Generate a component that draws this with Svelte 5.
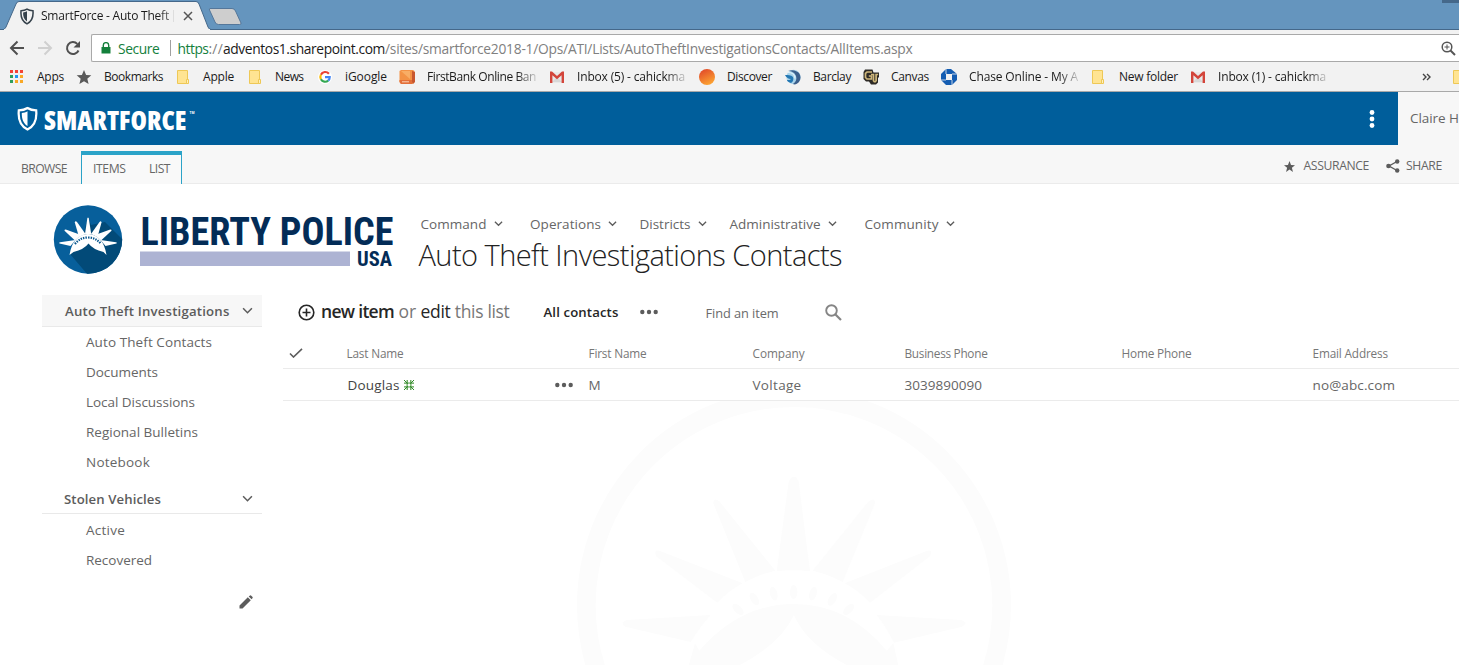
<script>
  const bookmarks = [
    { icon: 'apps', label: 'Apps', cell: 67, gap: 28, w: 27 },
    { icon: 'star', label: 'Bookmarks', cell: 101, gap: 28, w: 59 },
    { icon: 'folder', label: 'Apple', cell: 72, gap: 26, w: 31 },
    { icon: 'folder', label: 'News', cell: 69, gap: 26, w: 28.5 },
    { icon: 'google', label: 'iGoogle', cell: 81, gap: 27, w: 42 },
    { icon: 'bank', label: 'FirstBank Online Ban', cell: 150, gap: 28, w: 109, fade: true },
    { icon: 'gmail', label: 'Inbox (5) - cahickma', cell: 150, gap: 28, w: 108, fade: true },
    { icon: 'discover', label: 'Discover', cell: 86, gap: 28, w: 45 },
    { icon: 'barclay', label: 'Barclay', cell: 78, gap: 28, w: 38 },
    { icon: 'cu', label: 'Canvas', cell: 78, gap: 28, w: 38 },
    { icon: 'chase', label: 'Chase Online - My A', cell: 151, gap: 28, w: 109, fade: true },
    { icon: 'folder', label: 'New folder', cell: 98, gap: 27, w: 59 },
    { icon: 'gmail', label: 'Inbox (1) - cahickma', cell: 150, gap: 28, w: 108, fade: true }
  ];
  const menu = [
    { label: 'Command', w: 66, cell: 109.5 },
    { label: 'Operations', w: 71, cell: 109.5 },
    { label: 'Districts', w: 51, cell: 90 },
    { label: 'Administrative', w: 91, cell: 135 },
    { label: 'Community', w: 74, cell: 100 }
  ];
  const contacts = [
    ['Auto Theft Contacts', 126],
    ['Documents', 72],
    ['Local Discussions', 109],
    ['Regional Bulletins', 112],
    ['Notebook', 64]
  ];
  const vehicles = [
    ['Active', 39],
    ['Recovered', 66]
  ];

  // Spreads the letters so that the text takes up the given width.
  function fit(node, width) {
    const natural = node.getBoundingClientRect().width;
    const n = node.textContent.length;
    node.style.letterSpacing = `${((width - natural) / n).toFixed(3)}px`;
  }
</script>

{#snippet icon(name)}
  {#if name === 'apps'}
    <svg width="16" height="16" viewBox="0 0 16 16">
      {#each ['#f44336', '#f44336', '#f44336', '#2e9e5b', '#2196f3', '#f9a825', '#2e9e5b', '#f9a825', '#f9a825'] as c, i}
        <rect x={1 + (i % 3) * 5} y={1 + Math.floor(i / 3) * 5} width="3" height="3" fill={c} />
      {/each}
    </svg>
  {:else if name === 'star'}
    <svg width="16" height="16" viewBox="0 0 16 16"><path d="M8 1l2.100 4.900 5.200.4-4 3.400 1.300 5.300L8 12.200 3.400 15l1.300-5.300-4-3.400 5.200-.4z" fill="#5a5a5a" /></svg>
  {:else if name === 'folder'}
    <svg width="16" height="16" viewBox="0 0 16 16"><path d="M.5 1.500h10v13h-10z" fill="#ffe492" stroke="#eec856" /><path d="M9.500 10.500h2v4h-2z" fill="#fff0bd" stroke="#eec856" /></svg>
  {:else if name === 'google'}
    <svg width="16" height="16" viewBox="0 0 16 16"><circle cx="7" cy="8" r="7" fill="#fff" /><g fill="none" stroke-width="2.200"><path d="M10.900 4.700A4.800 4.800 0 0 0 2.900 5.700" stroke="#ea4335" /><path d="M2.900 5.700a4.800 4.800 0 0 0 0 4.600" stroke="#fbbc05" /><path d="M2.900 10.300a4.800 4.800 0 0 0 7.300 1.300" stroke="#34a853" /><path d="M10.200 11.600a4.800 4.800 0 0 0 1.500-3.400H7" stroke="#4285f4" /></g></svg>
  {:else if name === 'bank'}
    <svg width="17" height="16" viewBox="0 0 17 16"><path d="M2 1h12l1.500 1v11l-2 2H2L.5 13V2z" fill="#f39245" /><path d="M13 2l3 1v10l-2 2-1-2z" fill="#c8572f" /><path d="M.5 11H13v4H2l-1.500-2z" fill="#e36f39" /><path d="M2 2h9v8z" fill="#f8ad65" /><path d="M3 12.800h7" stroke="#fbd1b4" /></svg>
  {:else if name === 'gmail'}
    <svg width="16" height="16" viewBox="0 0 16 16"><path d="M2 3h12v11H2z" fill="#e9e9e9" /><path d="M3 13l5-5 5 5z" fill="#d8d8d8" /><path d="M1 2.500h2l5 4.600 5-4.600h2V14h-2.400V6.300L8 10.200 3.400 6.300V14H1z" fill="#d3453b" /></svg>
  {:else if name === 'discover'}
    <svg width="16" height="16" viewBox="0 0 16 16"><defs><linearGradient id="orange" x1="0" y1="0" x2=".5" y2="1"><stop offset=".2" stop-color="#e4532a" /><stop offset="1" stop-color="#fba032" /></linearGradient></defs><circle cx="8" cy="8" r="8" fill="url(#orange)" /></svg>
  {:else if name === 'barclay'}
    <svg width="16" height="16" viewBox="0 0 16 16"><circle cx="8.500" cy="8" r="7.200" fill="#a9d3ea" /><path d="M3 2c5-2 9 0 11 2 2 3 2 6 0 9-2 2-4 3-6 2 3-2 4-5 3-8C10 4 7 2 3 2z" fill="#3b5f8c" /><path d="M0 6c3 0 6 0 8 2 1 2 0 5-2 6-3-1-4-2-4-3 2 0 3 0 4-1-3 0-5-2-6-4z" fill="#2377b3" /><path d="M3 3.500c4 0 7 2 7 6" stroke="#e3f2f9" stroke-width="1.200" fill="none" /></svg>
  {:else if name === 'cu'}
    <svg width="17" height="16" viewBox="0 0 17 16"><path d="M2 .5h7.500l1 3H16V8.500h-1v5l-2 2H8l-2-3H3L.5 10V3z" fill="#2d2a26" /><path d="M9 3H4L2.500 4.300V8.500L4 10h4.500V7H5.800" fill="none" stroke="#cfb87c" stroke-width="1.700" /><path d="M8 5.500h2.500v6.300l.8.900h1l.8-.9V5.500h2" fill="none" stroke="#cfb87c" stroke-width="1.700" /></svg>
  {:else if name === 'chase'}
    <svg width="16" height="16" viewBox="0 0 16 16"><path d="M5 0h5l6 5v6l-5 5H5l-5-5V5z" fill="#145db2" /><path d="M5 5h6v6H5z" fill="#f2f2f2" /><path d="M5 0v5M16 5h-5M11 16v-5M0 11h5" stroke="#f2f2f2" stroke-width=".8" /></svg>
  {/if}
{/snippet}

{#snippet chevron(size)}
  <svg width={size} height={size} viewBox="0 0 10 10"><path d="M1 3l4 4 4-4" fill="none" stroke="#5c5c5c" stroke-width="1.400" /></svg>
{/snippet}

{#snippet shield(w, h, color)}
  <svg width={w} height={h} viewBox="0 0 20 24">
    <path d="M10 1.500c2.500 1.700 5.200 2.300 8.500 2.300.8 8-1 15-8.500 18.700C2.500 18.800.7 11.800 1.500 3.800c3.300 0 6-.6 8.500-2.300z" fill="none" stroke={color} stroke-width="2.200" />
    <path d="M10 4.600C8.300 5.700 6.400 6.200 4.400 6.400c-.1 5.500 1.200 9.900 5.600 12.800z" fill={color} />
  </svg>
{/snippet}

{#snippet dots()}
  <svg class="dots" width="18" height="6" viewBox="0 0 18 6" fill="#5c5c5c"><circle cx="2.300" cy="3" r="2.200" /><circle cx="9" cy="3" r="2.200" /><circle cx="15.700" cy="3" r="2.200" /></svg>
{/snippet}

<div class="window">
  <div class="tabstrip">
    <svg class="tabshape" width="260" height="30" viewBox="0 0 260 30">
      <path d="M0 29.500H3.500Q5 29 6 27L16 4Q17 1.500 19 1.500H196Q198 1.500 199 4L208 27Q209 29.500 211 29.500" fill="#f2f2f2" stroke="#45688a" />
      <path d="M4 29h206v1H4z" fill="#f2f2f2" />
      <path d="M210 8.500h22q2.500 0 3.500 2.500l5.500 12q.5 1.500-1.500 1.500h-21q-2.500 0-3.500-2.500l-5.500-12q-.5-1.500.5-1.500z" fill="#cecece" stroke="#55779a" />
    </svg>
    <div class="tab">
      {@render shield(14, 17, '#36424c')}
      <span class="tabname"><span class="t" use:fit={128}>SmartForce - Auto Theft</span></span>
      <i></i>
      <svg width="10" height="10" viewBox="0 0 10 10"><path d="M1 1l8 8M9 1L1 9" stroke="#555" stroke-width="1.500" /></svg>
    </div>
    <div class="control"></div>
  </div>

  <div class="toolbar">
    <svg width="16" height="16" viewBox="0 0 16 16"><path d="M15 8H2M8.500 1.500L2 8l6.500 6.500" fill="none" stroke="#505050" stroke-width="2" /></svg>
    <svg width="16" height="16" viewBox="0 0 16 16"><path d="M1 8h13M7.500 1.500L14 8l-6.500 6.500" fill="none" stroke="#d0d0d0" stroke-width="2" /></svg>
    <svg width="16" height="16" viewBox="0 0 16 16"><path d="M13.500 10.500A6 6 0 1 1 12.300 3.900" fill="none" stroke="#505050" stroke-width="2" /><path d="M15 1v6.500H8.500z" fill="#505050" /></svg>
    <div class="omnibox">
      <svg width="10" height="12" viewBox="0 0 10 12"><path d="M.5 5h9v6.500h-9z" fill="#14803c" /><path d="M2.300 5V3.300a2.700 2.700 0 0 1 5.400 0V5" fill="none" stroke="#14803c" stroke-width="1.400" /></svg>
      <span class="t secure" use:fit={41.5}>Secure</span>
      <i></i>
      <span class="url"><span class="t green" use:fit={31}>https</span><span class="t" use:fit={14.500}>://</span><span class="t host" use:fit={162}>adventos1.sharepoint.com</span><span class="t" use:fit={527.500}>/sites/smartforce2018-1/Ops/ATI/Lists/AutoTheftInvestigationsContacts/AllItems.aspx</span></span>
      <svg class="zoom" width="15" height="15" viewBox="0 0 15 15" fill="none" stroke="#555"><circle cx="6" cy="6" r="4.800" stroke-width="1.500" /><path d="M9.500 9.500l4.500 4.500" stroke-width="2" /><path d="M3.500 6h5M6 3.500v5" /></svg>
    </div>
  </div>

  <div class="bookmarks">
    {#each bookmarks as b}
      <div class="bookmark" style="width:{b.cell}px">
        <span class="bicon" style="width:{b.gap}px">{@render icon(b.icon)}</span>
        <span class="t" class:fade={b.fade} use:fit={b.w}>{b.label}</span>
      </div>
    {/each}
    <svg class="more" width="9" height="8" viewBox="0 0 9 8"><path d="M1 1l3 3-3 3M5 1l3 3-3 3" fill="none" stroke="#444" stroke-width="1.400" /></svg>
    <i></i>
    {@render icon('folder')}
  </div>

  <header>
    <div class="brand">
      <svg width="1398" height="53" viewBox="0 92 1398 53">
        <g transform="translate(17 106.500)">{@render shield(21, 24.500, '#fff')}</g>
        <text class="smart" x="44" y="129.500" textLength="142.500" lengthAdjust="spacingAndGlyphs">SMARTFORCE</text>
        <text class="tm" x="189.500" y="113.500" textLength="5" lengthAdjust="spacingAndGlyphs">TM</text>
        <g fill="#fff"><circle cx="1372" cy="112.500" r="2.400" /><circle cx="1372" cy="119" r="2.400" /><circle cx="1372" cy="125.500" r="2.400" /></g>
      </svg>
    </div>
    <div class="user"><span class="t" use:fit={49}>Claire H</span></div>
  </header>

  <div class="ribbon">
    <div class="browse"><span class="t" use:fit={46}>BROWSE</span></div>
    <div class="group"><span class="t" use:fit={32.500}>ITEMS</span><span class="t" use:fit={21}>LIST</span></div>
    <div class="actions">
      <svg width="11" height="11" viewBox="0 0 16 16"><path d="M8 0l2.200 5.700 5.800.3-4.500 3.700L13 16l-5-3.500L3 16l1.500-6.300L0 6l5.800-.3z" fill="#5c5c5c" /></svg>
      <span class="t assurance" use:fit={65.500}>ASSURANCE</span>
      <svg width="14" height="14" viewBox="0 0 14 14" fill="#5c5c5c"><path d="M11 2.500L3 7l8 4.500" fill="none" stroke="#5c5c5c" stroke-width="1.400" /><circle cx="11.200" cy="2.500" r="2.200" /><circle cx="2.500" cy="7" r="2.300" /><circle cx="11.200" cy="11.500" r="2.200" /></svg>
      <span class="t share" use:fit={36}>SHARE</span>
    </div>
  </div>

  <div class="page">
    <svg class="watermark" width="480" height="264" viewBox="0 3 1440 792">
      <circle cx="702" cy="616" r="623" fill="none" stroke="#fcfcfc" stroke-width="56" />
      <g fill="#fcfcfc">
        <path d="M650 514L686 245Q702 215 716 245L750 514Q700 507 650 514z" />
        <path d="M556 546L460 310Q460 290 478 304L646 512Q600 522 556 546z" />
        <path d="M848 546L945 310Q945 290 926 304L758 512Q804 522 848 546z" />
        <path d="M472 608L288 468Q280 446 302 454L548 550Q504 573 472 608z" />
        <path d="M930 608L1110 468Q1120 446 1098 454L854 550Q898 573 930 608z" />
        <path d="M392 726L196 680Q178 668 200 660L452 645Q420 680 392 726z" />
        <path d="M1002 728L1206 680Q1226 668 1204 660L950 645Q978 680 1002 728z" />
        <path d="M385 800L405 730 418 752Q540 612 702 612T980 752L1000 730 1016 800H870Q740 735 702 645 660 735 530 800z" />
        {#each [[534, 628, -45], [583, 597, -30], [641, 581, -15], [701, 576, 0], [759, 581, 15], [817, 598, 30], [866, 628, 45]] as [x, y, r]}
          <ellipse cx={x} cy={y} rx="11" ry="21" transform="rotate({r} {x} {y})" />
        {/each}
      </g>
    </svg>

    <div class="top">
      <svg class="logo" width="343" height="74" viewBox="52 203 343 74">
        <defs><clipPath id="disc"><circle cx="88" cy="239.500" r="34.200" /></clipPath></defs>
        <circle cx="88" cy="239.500" r="34.200" fill="#075f9b" />
        <path d="M88 217l3 8 14-3 24 24v36H94L70 254l12-14z" fill="#024a78" clip-path="url(#disc)" />
        <g fill="#fff">
          <path d="M85 234L87.300 218.500Q88 216.500 88.800 218.500L91.200 234z" />
          <path d="M79 237L74.800 222.500Q75.200 220.500 77 222L85.500 234z" />
          <path d="M97.500 237L101.500 222.500Q101 220.500 99.500 222L91 234z" />
          <path d="M75 240.500L64.500 230.800Q64.300 229 66.500 229.700L81 235z" />
          <path d="M101 240.500L111.500 230.800Q111.800 229 109.500 229.700L95 235z" />
          <path d="M70.500 246L59.500 243.600Q58.500 242.600 60 242.200L75.500 240z" />
          <path d="M105.500 246L116.500 243.600Q117.500 242.600 116 242.200L100.500 240z" />
          <path d="M69.500 255Q71 245 76 239.500 81 234 88 234T100 239.500Q105 245 106.500 255L103.500 252Q93 249.500 88.500 243.500 84 249.500 73.500 252z" />
        </g>
        <path d="M75 244Q80 237.500 88 237.500T101 244" fill="none" stroke="#06558c" stroke-width="2.200" stroke-dasharray="1.400 1.100" />
        <text class="liberty" x="140.500" y="245" textLength="253" lengthAdjust="spacingAndGlyphs">LIBERTY POLICE</text>
        <path d="M140 251.500h210v14.500H140z" fill="#adb3d3" />
        <text class="usa" x="357" y="265.700" textLength="35" lengthAdjust="spacingAndGlyphs">USA</text>
      </svg>
      <div class="heading">
        <nav>
          {#each menu as m}
            <div style="width:{m.cell}px"><span class="t" use:fit={m.w}>{m.label}</span>{@render chevron(9)}</div>
          {/each}
        </nav>
        <h1><span class="t" use:fit={423.500}>Auto Theft Investigations Contacts</span></h1>
      </div>
    </div>

    <div class="body">
      <aside>
        <div class="section shaded"><span class="t" use:fit={164.500}>Auto Theft Investigations</span>{@render chevron(11)}</div>
        {#each contacts as [label, w]}
          <div class="link"><span class="t" use:fit={w}>{label}</span></div>
        {/each}
        <div class="section plain"><span class="t" use:fit={97}>Stolen Vehicles</span>{@render chevron(11)}</div>
        {#each vehicles as [label, w]}
          <div class="link"><span class="t" use:fit={w}>{label}</span></div>
        {/each}
        <svg class="pencil" width="14" height="14" viewBox="0 0 14 14"><path d="M.5 13.500v-3L8.800 2.300l3 3L3.500 13.500zM9.700 1.500L11 .4q.6-.3 1 0l1.600 1.700q.3.500 0 1L12.600 4.300z" fill="#5c5c5c" /></svg>
      </aside>

      <main>
        <div class="commands">
          <svg width="17" height="17" viewBox="0 0 17 17" fill="none" stroke="#262626" stroke-width="1.600"><circle cx="8.500" cy="8.500" r="7.300" /><path d="M4.500 8.500h8M8.500 4.500v8" /></svg>
          <span class="new"><b class="t" use:fit={73}>new item</b><span class="t" use:fit={26.500}>&nbsp;or&nbsp;</span><span class="t dark" use:fit={30}>edit</span><span class="t" use:fit={59}>&nbsp;this list</span></span>
          <b class="t view" use:fit={75}>All contacts</b>
          {@render dots()}
          <span class="t find" use:fit={73}>Find an item</span>
          <svg class="search" width="17" height="17" viewBox="0 0 17 17" fill="none" stroke="#858585"><circle cx="6.500" cy="6.500" r="5.300" stroke-width="1.900" /><path d="M10.500 10.500l5.500 5.500" stroke-width="2.200" /></svg>
        </div>
        <div class="row head">
          <div class="check"><svg width="14" height="10" viewBox="0 0 14 10"><path d="M1 5.500L4.500 9 13 .8" fill="none" stroke="#5c5c5c" stroke-width="1.600" /></svg></div>
          <div></div>
          <div><span class="t" use:fit={57}>Last Name</span></div>
          <div></div>
          <div><span class="t" use:fit={58}>First Name</span></div>
          <div><span class="t" use:fit={52}>Company</span></div>
          <div><span class="t" use:fit={83}>Business Phone</span></div>
          <div><span class="t" use:fit={70}>Home Phone</span></div>
          <div><span class="t" use:fit={75.500}>Email Address</span></div>
        </div>
        <div class="row data">
          <div></div>
          <div></div>
          <div class="person"><span class="t" use:fit={52}>Douglas</span>
            <svg width="10" height="10" viewBox="0 0 10 10"><path d="M3.200 0v10M6.800 0v10M0 3.200h10M0 6.800h10" stroke="#57a04c" stroke-width="1.300" /><path d="M0 0l10 10M10 0L0 10" stroke="#2f8a2a" stroke-width="1" /><path d="M3.800 3.800h2.400v2.400H3.800z" fill="#fff" /></svg>
          </div>
          <div class="menu">{@render dots()}</div>
          <div><span class="t">M</span></div>
          <div><span class="t" use:fit={49}>Voltage</span></div>
          <div><span class="t" use:fit={77.500}>3039890090</span></div>
          <div></div>
          <div><span class="t" use:fit={82.500}>no@abc.com</span></div>
        </div>
      </main>
    </div>
  </div>
</div>

<style>
  :global(body) { background: #fff; }
  .window { width: 1459px; height: 665px; overflow: hidden; position: relative; font-family: 'Open Sans', 'Noto Sans', sans-serif; font-size: 12px; font-stretch: 90%; color: #666; }
  .window *, .window { box-sizing: border-box; }
  svg { display: block; flex: none; }
  .t { display: inline-block; white-space: pre; flex: none; }

  .tabstrip { height: 30px; background: #6595be; border-bottom: 1px solid #45688a; position: relative; display: flex; }
  .tabshape { position: absolute; left: 0; top: 0; }
  .tab { position: relative; display: flex; align-items: center; padding: 3px 0 0 20px; height: 29px; color: #1a1a1a; }
  .tabname { margin: -2px 0 0 7px; width: 132px; overflow: hidden; -webkit-mask: linear-gradient(90deg, #000 88%, #0008); mask: linear-gradient(90deg, #000 88%, #0008); }
  .tab i { width: 1px; height: 12px; margin-right: 9px; background: #ddd; }
  .control { margin-left: auto; width: 17px; height: 3px; background: #45688a; }

  .toolbar { height: 33px; background: #f2f2f2; display: flex; align-items: center; padding: 3px 0 0 9px; }
  .toolbar > svg { margin-right: 12px; }
  .omnibox { flex: 1; height: 28px; margin-left: -2px; background: #fff; border: 1px solid #a9a9a9; border-right: 0; border-radius: 2px 0 0 2px; display: flex; align-items: center; padding-left: 9px; font-size: 13.800px; color: #808080; }
  .secure { color: #14803c; margin-left: 7px; }
  .omnibox i { width: 1px; height: 16px; background: #a0a0a0; margin: 0 7px 0 10px; }
  .url { display: flex; }
  .green { color: #14803c; }
  .host { color: #1a1a1a; }
  .zoom { margin: 0 3px 0 auto; }

  .bookmarks { height: 29px; background: #f2f2f2; border-bottom: 1px solid #a9a9a9; display: flex; align-items: center; padding-left: 9px; color: #1a1a1a; }
  .bookmark { display: flex; align-items: center; flex: none; }
  .bookmark .t { margin-top: -2px; }
  .bicon { flex: none; }
  .fade { -webkit-mask: linear-gradient(90deg, #000 82%, #0003); mask: linear-gradient(90deg, #000 82%, #0003); }
  .more { margin-left: 82px; }
  .bookmarks i { width: 1px; height: 16px; background: #bbb; margin: 0 12px 0 10px; }

  header { height: 53px; background: #f7f7f7; display: flex; }
  .brand { width: 1398px; flex: none; background: #005e9b; }
  .smart { font: 800 27px 'Open Sans', sans-serif; font-stretch: 75%; fill: #fff; }
  .tm { font: 700 4px 'Open Sans', sans-serif; fill: #fff; }
  .user { display: flex; align-items: center; padding: 0 0 2px 12px; font-size: 13.500px; }

  .ribbon { height: 39px; background: #f7f7f7; border-bottom: 1px solid #ebebeb; display: flex; font-size: 12.200px; }
  .browse { width: 81px; padding: 15px 0 0 21px; }
  .group { width: 101px; height: 33px; margin-top: 6px; border: 1px solid #2ba3c8; border-top-width: 4px; border-bottom: 0; background: #f9f9f9; padding: 5px 11px 0; display: flex; justify-content: space-between; align-items: start; }
  .actions { margin-left: auto; display: flex; height: 42px; align-items: center; }
  .actions .t { position: relative; top: -1px; }
  .assurance { margin: 0 17px 0 9px; }
  .share { margin: 0 17px 0 6px; }

  .page { position: relative; height: 481px; }
  .watermark { position: absolute; left: 560px; top: 217px; }
  .top { display: flex; padding: 19px 0 0 52px; position: relative; }
  .liberty { font: 700 38px Roboto, sans-serif; font-stretch: 75%; fill: #032c57; }
  .usa { font: 700 19.500px Roboto, sans-serif; font-stretch: 75%; fill: #032c57; }
  .heading { padding-left: 25.500px; }
  nav { display: flex; height: 39px; padding-top: 2px; font-size: 13.500px; }
  nav div { display: flex; align-items: center; gap: 7px; }
  h1 { margin: -7px 0 1px -2px; font-size: 29px; line-height: 40px; font-weight: 300; color: #222; }

  .body { display: flex; position: relative; }
  aside { width: 221px; margin: 18px 20px 0 42px; font-size: 13.500px; flex: none; }
  .section { width: 220px; display: flex; justify-content: space-between; align-items: center; border-bottom: 1px solid #e9e9e9; padding: 0 9px 0 23px; font-weight: 600; font-size: 13.200px; height: 32px; color: #5c5c5c; }
  .shaded { background: #f7f7f7; }
  .plain { padding: 2px 9px 0 22px; margin: 5px 0 1px; }
  .link { height: 30px; padding-left: 44px; display: flex; align-items: center; }
  .pencil { margin: 20px 0 0 197px; }

  main { flex: 1; }
  .commands { height: 60px; display: flex; align-items: center; padding: 10px 0 0 15px; }
  .new { margin: -2px 0 0 6px; display: flex; font-size: 17.500px; color: #777; }
  b { font-weight: 600; color: #262626; }
  .dark { color: #262626; }
  .view { margin: 0 21px 0 34px; font-size: 13.200px; }
  .find { margin: 2px 0 0 48px; font-size: 12.800px; font-weight: 500; color: #6a6a6a; }
  .search { margin-left: 46px; }
  .row { display: grid; grid-template-columns: 29px 29px 204px 38px 164px 152px 217px 191px 152px; }
  .row > div { border-bottom: 1px solid #ebebeb; padding-left: 5.500px; display: flex; align-items: center; }
  .head { font-size: 11.800px; height: 32px; color: #777; }
  .data { height: 32px; font-size: 13.500px; }
  .row .person { gap: 4px; color: #444; padding-left: 6.500px; }
  .menu .dots { margin-left: 4px; }
</style>
